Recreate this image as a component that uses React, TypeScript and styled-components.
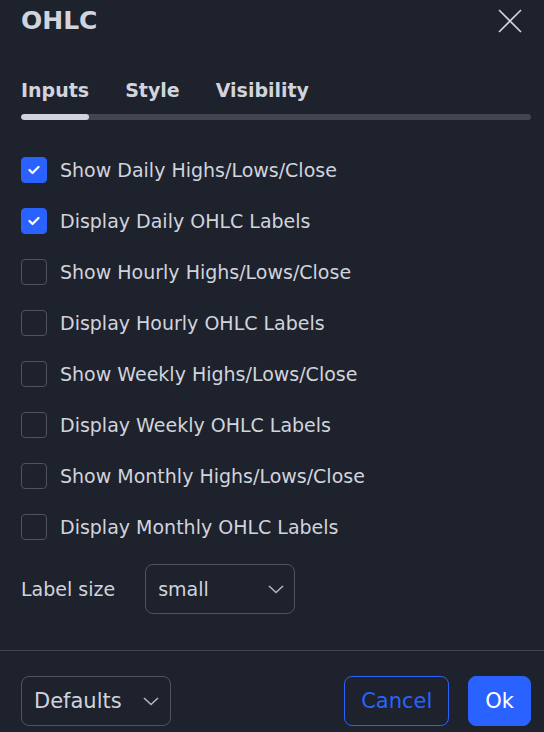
import React from "react";
import styled, { createGlobalStyle } from "styled-components";

const Global = createGlobalStyle`
  html, body { margin: 0; padding: 0; background: #1e222d; }
  body { font-family: "DejaVu Sans", "Liberation Sans", sans-serif; color: #d1d4dc; }
  * { box-sizing: border-box; }
`;

const Dialog = styled.div`
  width: 544px;
  height: 732px;
  overflow: hidden;
  background: #1e222d;
  display: flex;
  flex-direction: column;
`;

const Header = styled.div`
  height: 42px;
  display: flex;
  align-items: center;
  justify-content: space-between;
  padding: 0 22px 0 21px;
`;

const Title = styled.h1`
  margin: 0;
  font-size: 25px;
  line-height: 42px;
  font-weight: 700;
  color: #d1d4dc;
`;

const CloseButton = styled.button`
  width: 24px;
  height: 24px;
  padding: 0;
  border: 0;
  background: transparent;
  display: flex;
  cursor: pointer;
`;

const Tabs = styled.div`
  margin-top: 36px;
  padding: 0 13px 0 21px;
`;

const TabList = styled.div`
  display: flex;
  gap: 36px;
`;

const Tab = styled.div<{ $active?: boolean }>`
  font-size: 19px;
  line-height: 24px;
  font-weight: 700;
  color: #d1d4dc;
`;

const Track = styled.div`
  margin-top: 12px;
  height: 6px;
  border-radius: 3px;
  background: #434651;
  display: flex;
  overflow: hidden;
`;

const Indicator = styled.div`
  flex: none;
  width: 68px;
  height: 100%;
  border-radius: 3px;
  background: #d1d4dc;
`;

const List = styled.div`
  margin-top: 24px;
  padding: 0 13px 0 21px;
  display: flex;
  flex-direction: column;
`;

const Row = styled.label`
  height: 51px;
  display: flex;
  align-items: center;
  gap: 13px;
  font-size: 19px;
  color: #d1d4dc;
`;

const Box = styled.span<{ $checked?: boolean }>`
  flex: none;
  width: 26px;
  height: 26px;
  border-radius: 4px;
  border: 1px solid ${(p) => (p.$checked ? "#2962ff" : "#50535e")};
  background: ${(p) => (p.$checked ? "#2962ff" : "transparent")};
  display: flex;
  align-items: center;
  justify-content: center;
`;

const Field = styled.div`
  margin-top: 12px;
  padding: 0 13px 0 21px;
  display: flex;
  align-items: center;
  gap: 30px;
  font-size: 19px;
`;

const Select = styled.div<{ $large?: boolean }>`
  width: ${(p) => (p.$large ? "150px" : "150px")};
  height: 50px;
  border: 1px solid #50535e;
  border-radius: 8px;
  display: flex;
  align-items: center;
  justify-content: space-between;
  padding: ${(p) => (p.$large ? "0 11px 0 12px" : "0 10px 0 12px")};
  font-size: ${(p) => (p.$large ? "21px" : "19px")};
  color: #d1d4dc;
`;

const Divider = styled.div`
  margin-top: 36px;
  height: 1px;
  background: #434651;
`;

const Footer = styled.div`
  padding: 25px 13px 6px 21px;
  display: flex;
  align-items: center;
`;

const Spacer = styled.div`
  flex: 1;
`;

const Button = styled.button<{ $primary?: boolean }>`
  height: 50px;
  padding: 0 ${(p) => (p.$primary ? "16px" : "16px")};
  margin-left: ${(p) => (p.$primary ? "19px" : "0")};
  border-radius: 8px;
  border: 1px solid #2962ff;
  background: ${(p) => (p.$primary ? "#2962ff" : "transparent")};
  color: ${(p) => (p.$primary ? "#ffffff" : "#2962ff")};
  font-family: "DejaVu Sans", "Liberation Sans", sans-serif;
  font-size: 21px;
  cursor: pointer;
`;

const Chevron = () => (
  <svg width="16" height="9" viewBox="0 0 16 9" fill="none">
    <path d="M1 1 L8 7.5 L15 1" stroke="#b2b5be" strokeWidth="1.6" />
  </svg>
);

const Check = () => (
  <svg width="12" height="10" viewBox="0 0 12 10" fill="none">
    <path d="M1.5 5 L4.5 8 L10.5 2" stroke="#ffffff" strokeWidth="2.2" strokeLinecap="round" strokeLinejoin="round" />
  </svg>
);

const items: { label: string; checked: boolean }[] = [
  { label: "Show Daily Highs/Lows/Close", checked: true },
  { label: "Display Daily OHLC Labels", checked: true },
  { label: "Show Hourly Highs/Lows/Close", checked: false },
  { label: "Display Hourly OHLC Labels", checked: false },
  { label: "Show Weekly Highs/Lows/Close", checked: false },
  { label: "Display Weekly OHLC Labels", checked: false },
  { label: "Show Monthly Highs/Lows/Close", checked: false },
  { label: "Display Monthly OHLC Labels", checked: false },
];

export default function App() {
  return (
    <>
      <Global />
      <Dialog>
        <Header>
          <Title>OHLC</Title>
          <CloseButton aria-label="Close">
            <svg width="24" height="24" viewBox="0 0 24 24" fill="none">
              <path d="M1 1 L23 23 M23 1 L1 23" stroke="#d1d4dc" strokeWidth="1.6" />
            </svg>
          </CloseButton>
        </Header>
        <Tabs>
          <TabList>
            <Tab $active>Inputs</Tab>
            <Tab>Style</Tab>
            <Tab>Visibility</Tab>
          </TabList>
          <Track>
            <Indicator />
          </Track>
        </Tabs>
        <List>
          {items.map((it) => (
            <Row key={it.label}>
              <Box $checked={it.checked}>{it.checked && <Check />}</Box>
              {it.label}
            </Row>
          ))}
        </List>
        <Field>
          <span>Label size</span>
          <Select>
            <span>small</span>
            <Chevron />
          </Select>
        </Field>
        <Divider />
        <Footer>
          <Select $large>
            <span>Defaults</span>
            <Chevron />
          </Select>
          <Spacer />
          <Button>Cancel</Button>
          <Button $primary>Ok</Button>
        </Footer>
      </Dialog>
    </>
  );
}
